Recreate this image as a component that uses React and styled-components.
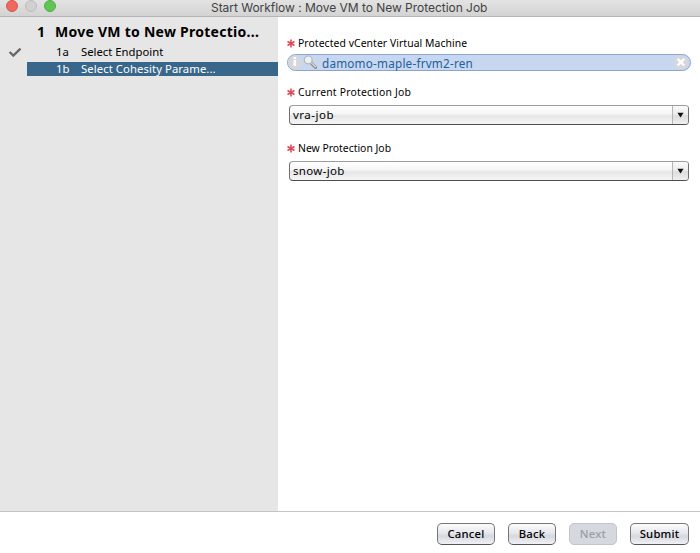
import React from "react";
import styled, { createGlobalStyle } from "styled-components";

const Global = createGlobalStyle`
  * { box-sizing: border-box; }
  body { margin: 0; background: #fff; overflow: hidden; font-family: "Noto Sans", sans-serif; color: #000; }
`;
const Window = styled.div`
  width: 700px; height: 553px; display: flex; flex-direction: column; background: #fff;
`;
const TitleBar = styled.header`
  height: 17px; flex: none; display: grid; grid-template-columns: 100px 1fr 113px; align-items: center;
  background: linear-gradient(#e3e3e3, #d3d3d3); border-bottom: 1px solid #b5b5b5;
`;
const Lights = styled.div`
  display: flex; gap: 7px; padding-left: 6px; align-self: start;
`;
const Light = styled.span`
  width: 12px; height: 12px; border-radius: 50%; background: ${p => p.$fill}; border: 1px solid ${p => p.$edge};
`;
const Title = styled.h1`
  margin: 0; padding-left: 111px; font: 400 12px/15px Inter, sans-serif; letter-spacing: -0.03px;
  color: #424242; white-space: nowrap; align-self: start;
`;
const Body = styled.div`
  flex: 1; min-height: 0; display: flex;
`;
const Sidebar = styled.nav`
  width: 278px; flex: none; background: #e6e6e6; padding-top: 5px;
`;
const Heading = styled.h2`
  margin: 0; height: 21px; display: grid; grid-template-columns: 18px 1fr; padding-left: 37px;
  font-size: 14px; line-height: 20px; font-weight: 700; letter-spacing: 0.26px; white-space: nowrap;
`;
const Step = styled.div`
  height: ${p => (p.$active ? "14px" : "18px")}; display: grid; grid-template-columns: 27px 1fr; align-items: center;
  margin-top: ${p => (p.$active ? "1px" : "0")};
`;
const Mark = styled.span`
  display: flex; padding-left: 8px;
`;
const StepLabel = styled.div`
  height: 100%; display: grid; grid-template-columns: 25px 1fr; align-items: center; padding-left: 29px;
  font-size: 11.3px; line-height: 14px; white-space: nowrap; letter-spacing: ${p => p.$spacing || "0"};
  color: ${p => (p.$active ? "#fff" : "#000")}; background: ${p => (p.$active ? "#38678b" : "transparent")};
`;
const Form = styled.main`
  flex: 1; display: flex; flex-direction: column; padding: 18px 9px 0 9px;
`;
const FieldLabel = styled.label`
  height: 16px; margin-top: ${p => p.$top || "0"}; display: flex; align-items: center; gap: 3px;
  font-size: 10.4px; line-height: 16px; letter-spacing: ${p => p.$spacing || "0"};
`;
const SearchField = styled.div`
  height: 17px; margin-top: 3px; display: flex; align-items: center; padding: 0 1px 0 0;
  border: 1px solid #8ca5ce; border-radius: 9px; background: #c7d7f0;
  color: #23609d; font-size: 11.7px; letter-spacing: 0.22px;
  svg { flex: none; }
`;
const Value = styled.span`
  flex: 1; line-height: 14px; padding-left: 4px;
`;
const Select = styled.div`
  height: 20px; margin: 5px 2px 0 2px; display: flex; align-items: stretch; border: 1px solid #707070;
  border-top-color: #9d9d9d; border-bottom-color: #4d4d4d; border-radius: 4px; overflow: hidden;
  background: linear-gradient(#fff 0%, #f5f5f5 45%, #e6e6e6 55%, #f6f6f6 100%);
  font-size: 11.5px; line-height: 18px; letter-spacing: ${p => p.$spacing || "0"};
`;
const SelectText = styled.span`
  flex: 1; padding-left: 3px;
`;
const Arrow = styled.span`
  width: 16px; display: flex; align-items: center; justify-content: center; border-left: 1px solid #b5b5b5;
  background: linear-gradient(#fafafa 0%, #ededed 45%, #dcdcdc 55%, #f0f0f0 100%);
`;
const Footer = styled.footer`
  height: 42px; flex: none; display: flex; align-items: flex-start; justify-content: flex-end; gap: 13px;
  padding: 11px 11px 0 0; border-top: 1px solid #c4c4c4;
`;
const Button = styled.button`
  width: ${p => p.$width}; height: 22px; padding: 0; border-radius: 5px;
  border: 1px solid #777; border-bottom-color: #555;
  background: linear-gradient(#fcfcfd 0%, #e6e7ec 45%, #d6d8df 60%, #f0f1f5 100%);
  color: #000; font: 500 11.3px/18px "Noto Sans", sans-serif; letter-spacing: ${p => p.$spacing || "0"};
  &:disabled { color: #9b9ea4; background: #d5d8de; border-color: #c0c5cc; }
`;

const Required = () => (
  <svg width="8" height="9" viewBox="0 0 8 9">
    <path d="M4 .6v7.8M.5 2.5l7 4M.5 6.5l7-4" stroke="#dc4b5a" strokeWidth="1.6" />
  </svg>
);
const Check = () => (
  <svg width="14" height="11" viewBox="0 0 14 11">
    <path d="M1.6 5 5.3 8.6 12.5 1.6" fill="none" stroke="#686868" strokeWidth="2.3" />
  </svg>
);
const Info = () => (
  <svg width="15" height="15" viewBox="0 0 15 15">
    <circle cx="7" cy="7.5" r="7" fill="#d6d7da" />
    <path d="M6.8 2v2M6.8 5v6" stroke="#fff" strokeWidth="2.6" />
  </svg>
);
const Magnifier = () => (
  <svg width="15" height="15" viewBox="0 0 15 15">
    <path d="m8.3 8.2 4.3 4.1" stroke="#8c8c8c" strokeWidth="3.2" strokeLinecap="round" />
    <path d="m8.6 8 4 3.8" stroke="#d3d0c8" strokeWidth="1.6" strokeLinecap="round" />
    <circle cx="5.2" cy="4.9" r="3.9" fill="#e9f0f8" stroke="#b5b5b8" strokeWidth="1.2" />
  </svg>
);
const Clear = () => (
  <svg width="15" height="15" viewBox="0 0 15 15">
    <circle cx="7" cy="7.5" r="7" fill="#d6d7da" />
    <path d="m3.6 3.9 6.6 6.6m0-6.6-6.6 6.6" stroke="#fff" strokeWidth="2.3" />
  </svg>
);
const DownArrow = () => (
  <svg width="7" height="6" viewBox="0 0 7 6"><path d="M.4.7h6.2L3.5 5.4z" fill="#111" /></svg>
);
const Dropdown = ({ children, spacing }) => (
  <Select $spacing={spacing}>
    <SelectText>{children}</SelectText>
    <Arrow><DownArrow /></Arrow>
  </Select>
);

export default function App() {
  return (
    <Window>
      <Global />
      <TitleBar>
        <Lights>
          <Light $fill="#ef6a5e" $edge="#d9574b" />
          <Light $fill="#d0d0d0" $edge="#bcbcbc" />
          <Light $fill="#61c554" $edge="#4fae43" />
        </Lights>
        <Title>Start Workflow : Move VM to New Protection Job</Title>
      </TitleBar>
      <Body>
        <Sidebar>
          <Heading><span>1</span><span>Move VM to New Protectio...</span></Heading>
          <Step>
            <Mark><Check /></Mark>
            <StepLabel><span>1a</span><span>Select Endpoint</span></StepLabel>
          </Step>
          <Step $active>
            <Mark />
            <StepLabel $active $spacing="0.08px"><span>1b</span><span>Select Cohesity Parame...</span></StepLabel>
          </Step>
        </Sidebar>
        <Form>
          <FieldLabel $spacing="0.07px"><Required />Protected vCenter Virtual Machine</FieldLabel>
          <SearchField><Info /><Magnifier /><Value>damomo-maple-frvm2-ren</Value><Clear /></SearchField>
          <FieldLabel $top="13px" $spacing="0.2px"><Required />Current Protection Job</FieldLabel>
          <Dropdown spacing="0.5px">vra-job</Dropdown>
          <FieldLabel $top="15px"><Required />New Protection Job</FieldLabel>
          <Dropdown spacing="0.32px">snow-job</Dropdown>
        </Form>
      </Body>
      <Footer>
        <Button $width="58px" $spacing="0.2px">Cancel</Button>
        <Button $width="48px" $spacing="0.2px">Back</Button>
        <Button $width="48px" $spacing="0.2px" disabled>Next</Button>
        <Button $width="59px" $spacing="0.2px">Submit</Button>
      </Footer>
    </Window>
  );
}
